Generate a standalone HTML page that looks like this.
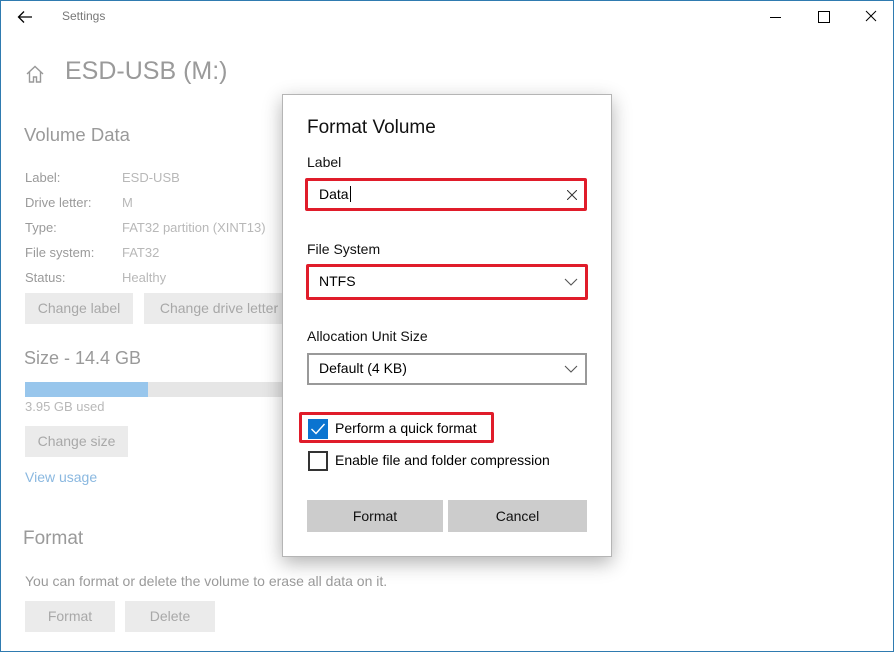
<!DOCTYPE html>
<html><head><style>
body{margin:0;width:894px;height:652px;overflow:hidden;font-family:"Segoe UI","Liberation Sans",sans-serif;}
.win{position:absolute;left:0;top:0;width:894px;height:652px;box-shadow:inset 0 0 0 1px #2f7bb0;background:#fff;overflow:hidden}
.a{position:absolute;white-space:nowrap}
.g{color:#9a9a9a}
.gl{color:#b8b8b8}
.btn{position:absolute;background:#ebebeb;color:#a8a8a8;font-size:14px;text-align:center}
.dlg{position:absolute;left:282px;top:94px;width:328px;height:461px;background:#fff;border:1px solid #b5b5b5;box-shadow:0 6px 18px rgba(0,0,0,.3)}
.red{position:absolute;border:3px solid #e01c2a;border-radius:2px}
.db{position:absolute;background:#ccc;color:#111;font-size:14px;text-align:center}
</style></head><body><div class="win">
<svg class="a" style="left:17px;top:10px" width="16" height="14" viewBox="0 0 16 14"><path d="M15 7H2M7 1.5L1.5 7 7 12.5" stroke="#000" stroke-width="1.3" fill="none"/></svg>
<div class="a" style="left:62px;top:9px;font-size:12px;color:#777">Settings</div>
<div class="a" style="left:770px;top:17px;width:11px;height:1px;background:#000"></div>
<div class="a" style="left:818px;top:11px;width:10px;height:10px;border:1px solid #000"></div>
<svg class="a" style="left:865px;top:10px" width="12" height="12"><path d="M1 1L11 11M11 1L1 11" stroke="#000" stroke-width="1"/></svg>
<svg class="a" style="left:25px;top:64px" width="20" height="20" viewBox="0 0 20 20"><path d="M2 10L10 2.5 18 10M4.5 8v10h4v-5h3v5h4V8" stroke="#999" stroke-width="1.4" fill="none"/></svg>
<div class="a g" style="left:65px;top:57px;font-size:25px">ESD-USB (M:)</div>
<div class="a g" style="left:24px;top:124px;font-size:18.5px">Volume Data</div>
<div class="a g" style="left:25px;top:170px;font-size:13px">Label:</div>
<div class="a g" style="left:25px;top:195px;font-size:13px">Drive letter:</div>
<div class="a g" style="left:25px;top:220px;font-size:13px">Type:</div>
<div class="a g" style="left:25px;top:245px;font-size:13px">File system:</div>
<div class="a g" style="left:25px;top:270px;font-size:13px">Status:</div>
<div class="a gl" style="left:122px;top:170px;font-size:13px">ESD-USB</div>
<div class="a gl" style="left:122px;top:195px;font-size:13px">M</div>
<div class="a gl" style="left:122px;top:220px;font-size:13px">FAT32 partition (XINT13)</div>
<div class="a gl" style="left:122px;top:245px;font-size:13px">FAT32</div>
<div class="a gl" style="left:122px;top:270px;font-size:13px">Healthy</div>
<div class="btn" style="left:25px;top:293px;width:108px;height:31px;line-height:31px">Change label</div>
<div class="btn" style="left:144px;top:293px;width:150px;height:31px;line-height:31px">Change drive letter</div>
<div class="a g" style="left:24px;top:348px;font-size:18px">Size - 14.4 GB</div>
<div class="a" style="left:25px;top:382px;width:270px;height:15px;background:#e6e6e6"></div>
<div class="a" style="left:25px;top:382px;width:123px;height:15px;background:#98c6ec"></div>
<div class="a gl" style="left:25px;top:399px;font-size:13px">3.95 GB used</div>
<div class="btn" style="left:25px;top:426px;width:103px;height:31px;line-height:31px">Change size</div>
<div class="a" style="left:25px;top:469px;font-size:14px;color:#8ab8e0">View usage</div>
<div class="a g" style="left:23px;top:528px;font-size:19px">Format</div>
<div class="a g" style="left:25px;top:573px;font-size:14px">You can format or delete the volume to erase all data on it.</div>
<div class="btn" style="left:25px;top:601px;width:90px;height:31px;line-height:31px">Format</div>
<div class="btn" style="left:125px;top:601px;width:90px;height:31px;line-height:31px">Delete</div>

<div class="dlg">
<div class="a" style="left:24px;top:22px;font-size:19px;color:#111">Format Volume</div>
<div class="a" style="left:24px;top:59px;font-size:14px;color:#111">Label</div>
<div class="red" style="left:22px;top:83px;width:276px;height:27px"></div>
<div class="a" style="left:36px;top:91px;font-size:14px;color:#000">Data<span style="border-left:1px solid #000;margin-left:1px"></span></div>
<svg class="a" style="left:284px;top:95px" width="10" height="10"><path d="M0 0L10 10M10 0L0 10" stroke="#333" stroke-width="1"/></svg>
<div class="a" style="left:24px;top:146px;font-size:14px;color:#111">File System</div>
<div class="red" style="left:23px;top:169px;width:276px;height:30px"></div>
<div class="a" style="left:36px;top:178px;font-size:14px;color:#000">NTFS</div>
<svg class="a" style="left:281px;top:183px" width="14" height="8"><path d="M1 1L7 7 13 1" stroke="#555" stroke-width="1.1" fill="none"/></svg>
<div class="a" style="left:24px;top:233px;font-size:14px;color:#111">Allocation Unit Size</div>
<div class="a" style="left:24px;top:258px;width:276px;height:28px;border:2px solid #999"></div>
<div class="a" style="left:36px;top:265px;font-size:14px;color:#000">Default (4 KB)</div>
<svg class="a" style="left:281px;top:270px" width="14" height="8"><path d="M1 1L7 7 13 1" stroke="#555" stroke-width="1.1" fill="none"/></svg>
<div class="red" style="left:16px;top:317px;width:189px;height:25px"></div>
<div class="a" style="left:25px;top:324px;width:20px;height:20px;background:#0b74d0"></div>
<svg class="a" style="left:27px;top:327px" width="16" height="14"><path d="M1.5 7L6 11.5 14.5 2" stroke="#fff" stroke-width="1.4" fill="none"/></svg>
<div class="a" style="left:52px;top:325px;font-size:14px;color:#000">Perform a quick format</div>
<div class="a" style="left:25px;top:356px;width:16px;height:16px;border:2px solid #333"></div>
<div class="a" style="left:52px;top:357px;font-size:14px;color:#000">Enable file and folder compression</div>
<div class="db" style="left:24px;top:405px;width:136px;height:32px;line-height:32px">Format</div>
<div class="db" style="left:165px;top:405px;width:139px;height:32px;line-height:32px">Cancel</div>
</div>
</div></body></html>
